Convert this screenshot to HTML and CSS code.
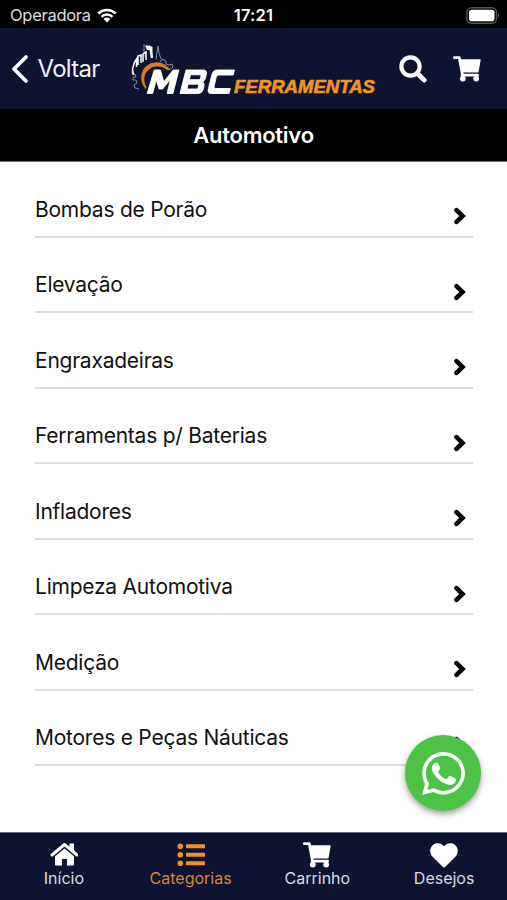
FILE: index.html
```html
<!DOCTYPE html>
<html lang="pt-BR">
<head>
<meta charset="utf-8">
<title>MBC Ferramentas</title>
<link rel="stylesheet" href="styles.css">
</head>
<body>
<svg class="defs" aria-hidden="true">
  <symbol id="chevron" viewBox="0 0 14 18"><path d="M3.500 3.200L9.500 9l-6 5.800" fill="none" stroke="#000" stroke-width="4.600" stroke-linecap="round" stroke-linejoin="miter"/></symbol>
  <symbol id="cart" viewBox="0 0 28 26"><path d="M1.300 1.700h5l3.100 16.700M9 19.200h15.600" fill="none" stroke="#fff" stroke-width="2.800" stroke-linecap="round" stroke-linejoin="round"/><path d="M6.400 3.300h20.200c.9 0 1.200.5 1 1.300l-2 11.100c-.1.600-.5.900-1.100.9H9z" fill="#fff"/><circle cx="9.800" cy="22.600" r="2.900" fill="#fff"/><circle cx="23.200" cy="22.600" r="2.900" fill="#fff"/></symbol>
</svg>
<div class="app">
  <div class="status">
    <span class="carrier">Operadora</span>
    <svg class="wifi" viewBox="0 0 20 15"><path d="M1.300 5.500a12.700 12.700 0 0 1 17.400 0M4.500 8.800a8 8 0 0 1 11 0" fill="none" stroke="#fff" stroke-width="2.500"/><path d="M6.500 10.900a5 5 0 0 1 7 0L10 14.600z" fill="#fff"/></svg>
    <span class="clock">17:21</span>
    <svg class="battery" viewBox="0 0 34 17"><rect x="1" y=".8" width="29.500" height="15.400" rx="4.500" fill="none" stroke="#555" stroke-width="1.400"/><rect x="3" y="2.800" width="25.500" height="11.400" rx="2.800" fill="#fff"/><path d="M32 6v5q2-2.500 0-5" fill="#666"/></svg>
  </div>
  <header class="header">
    <a class="back"><svg viewBox="0 0 18 30"><path d="M15 3L3 15l12 12" fill="none" stroke="#fff" stroke-width="3.800" stroke-linecap="round" stroke-linejoin="round"/></svg><span>Voltar</span></a>
    <svg class="logo" viewBox="130 40 250 60">
      <g fill="none" stroke="#8f98ad" stroke-width=".9">
        <path d="M139 89l-4-1-1-3 3-2-1-3h-3v-3h3l-1-3h-3v-4M160 62l2-3 4 2v3l3 1 3-1 1 3-2 2"/>
        <path d="M156 59l2-13 1 7 2 6M144 57V44"/>
      </g>
      <g fill="none" stroke="#fff" stroke-width="1.500">
        <path d="M133.500 75l-1-6 2-7 2-3v8M138 65v-9l3-1v8M143 62v-8l3-2v8"/>
      </g>
      <path d="M145 45.500h4.500l3 1.500v5l.5 6h-2.200l-1.300-8H147z" fill="#fff"/>
      <path d="M145.500 89a17 17 0 0 1-2.500-19 16 16 0 0 1 25-3l3 3h-4a14 14 0 0 0-21.500 3.500q-3 7 1 13.500z" fill="#d67c1b"/>
      <g fill="#fff" stroke="#fff" stroke-width=".9" stroke-linejoin="round">
        <path d="M147.200 93.500l7-23.500h6.200l3.400 12 9.300-12h5.800l-6 23.500h-5.800l3.500-14.500-8 10h-3.500l-2.800-9-3.700 13.500z"/>
        <path fill-rule="evenodd" d="M180 93.500l6-23.500h17q4.300 0 3.400 4.300l-1 3.900q-.7 2.800-3 3.700 2.400 1 1.600 4.200l-.9 3.400q-1 4-5 4zm7-4.500h9.500q1.400 0 1.700-1.500l.4-1.700q.4-1.600-1.100-1.600h-9.400zm2.300-9.300h9.500q1.300 0 1.600-1.300l.6-2.200q.3-1.400-1.100-1.400h-9.400z"/>
        <path d="M234.500 70l-1.400 5h-14.500q-1.800 0-2.300 1.800l-2.300 9.800q-.4 1.900 1.500 1.900h14.900L229 93.500h-17.700q-4 0-3-4.400l3.700-14.800q1.100-4.300 5.300-4.300z"/>
      </g>
      <text x="234" y="93" class="logo-sub" textLength="141" lengthAdjust="spacingAndGlyphs">FERRAMENTAS</text>
    </svg>
    <svg class="search" viewBox="0 0 28 28"><circle cx="11.500" cy="11.500" r="9.100" fill="none" stroke="#fff" stroke-width="4.200"/><path d="M18.500 18.500l6.700 6.700" stroke="#fff" stroke-width="4.700" stroke-linecap="round"/></svg>
    <svg class="cart"><use href="#cart"/></svg>
  </header>
  <h1 class="title">Automotivo</h1>
  <ul class="list">
    <li><span>Bombas de Porão</span><svg><use href="#chevron"/></svg></li>
    <li><span>Elevação</span><svg><use href="#chevron"/></svg></li>
    <li><span>Engraxadeiras</span><svg><use href="#chevron"/></svg></li>
    <li><span>Ferramentas p/ Baterias</span><svg><use href="#chevron"/></svg></li>
    <li><span>Infladores</span><svg><use href="#chevron"/></svg></li>
    <li><span>Limpeza Automotiva</span><svg><use href="#chevron"/></svg></li>
    <li><span>Medição</span><svg><use href="#chevron"/></svg></li>
    <li><span>Motores e Peças Náuticas</span><svg><use href="#chevron"/></svg></li>
  </ul>
  <nav class="tabs">
    <a><svg viewBox="0 0 28 26"><path d="M2 13L14.500 2.500 27 13" fill="none" stroke="#fff" stroke-width="3" stroke-linecap="round" stroke-linejoin="round"/><path d="M19.500 1.500h4.500v9l-4.500-3zM5 14.300l9.500-7.900 9.500 7.900v8.200q0 1-1 1h-6v-6.500h-5v6.500H6q-1 0-1-1z" fill="#fff"/></svg><span>Início</span></a>
    <a class="active"><svg viewBox="0 0 28 26"><g fill="#ee9228"><circle cx="3.300" cy="4.200" r="2.800"/><circle cx="3.300" cy="12.700" r="2.800"/><circle cx="3.300" cy="21.200" r="2.800"/><rect x="9" y="2.300" width="19" height="4" rx=".8"/><rect x="9" y="10.800" width="19" height="4" rx=".8"/><rect x="9" y="19.300" width="19" height="4" rx=".8"/></g></svg><span>Categorias</span></a>
    <a><svg><use href="#cart"/></svg><span>Carrinho</span></a>
    <a><svg viewBox="0 0 28 26"><path d="M14 4.300C17 .8 22 .2 25.300 3.300c3.400 3.200 3.200 8.200.1 11.400L15 25q-1 1-2 0L2.600 14.700C-.5 11.500-.7 6.500 2.700 3.300 6 .2 11 .8 14 4.300z" fill="#fff"/></svg><span>Desejos</span></a>
  </nav>
  <a class="whatsapp" aria-label="WhatsApp"><svg viewBox="0 0 448 512"><path fill="#fff" d="M380.900 97.100C339 55.100 283.200 32 223.900 32c-122.400 0-222 99.600-222 222 0 39.100 10.200 77.300 29.600 111L0 480l117.700-30.900c32.400 17.700 68.900 27 106.100 27h.1c122.300 0 224.100-99.600 224.100-222 0-59.300-25.200-115-67.100-157zm-157 341.600c-33.200 0-65.700-8.900-94-25.700l-6.700-4-69.800 18.300L72 359.200l-4.400-7c-18.500-29.400-28.200-63.300-28.200-98.200 0-101.700 82.800-184.500 184.600-184.500 49.300 0 95.600 19.200 130.400 54.100 34.800 34.900 56.200 81.200 56.100 130.500 0 101.800-84.900 184.600-186.600 184.600z"/><path fill="#fff" d="M151 145c8-1 15-1 19 8l18 43c3 8 1 12-3 18l-15 18c-4 5-4 9-1 14 19 32 45 54 79 67 6 3 10 2 14-3l19-23c5-7 9-6 16-4l44 21c7 4 11 5 12 9 2 17-5 38-20 49-17 12-37 17-59 11-70-20-118-59-157-121-21-34-20-73 8-100 7-6 15-7 26-7z"/></svg></a>
</div>
</body>
</html>
```
FILE: styles.css
```css
* { box-sizing: border-box; }
body { margin: 0; background: #fff; font-family: Inter, "Liberation Sans", sans-serif; color: #111; }
.defs { position: absolute; width: 0; height: 0; }
.app { position: relative; width: 507px; height: 900px; display: flex; flex-direction: column; overflow: hidden; }
svg { display: block; flex: none; }

.status { height: 28px; background: #000; display: grid; grid-template-columns: 87px 20px 1fr auto; align-items: center; padding: 1px 7px 0 10px; color: #fff; position: relative; }
.carrier { font-size: 16.500px; color: #ddd; letter-spacing: -.28px; line-height: 28px; }
.wifi { width: 20px; height: 15px; }
.clock { position: absolute; left: 0; right: 0; text-align: center; font-size: 16.500px; font-weight: 600; letter-spacing: .2px; line-height: 28px; top: 1px; }
.battery { width: 34px; height: 17px; grid-column: 4; }

.header { height: 81px; background: #0d1330; display: flex; align-items: center; padding-left: 11px; }
.back { display: flex; align-items: center; width: 119px; color: #eef0f7; font-size: 24px; letter-spacing: -.7px; }
.back svg { width: 18px; height: 30px; margin-right: 8.500px; }
.logo { width: 250px; height: 60px; margin-top: 2px; }
.logo-sub { font: italic 900 18px "Liberation Sans", sans-serif; fill: #f19421; stroke: #f19421; stroke-width: .6px; }
.search { width: 28px; height: 28px; margin-left: 18.500px; }
.cart { width: 28px; height: 26px; margin-left: 26.500px; }

.title { height: 53px; margin: 0; background: #000; border-bottom: 1px solid #777; color: #fff; font-size: 22px; font-weight: 600; letter-spacing: -.25px; line-height: 53px; text-align: center; }

.list { list-style: none; margin: 0; padding: 0 34px 0 35px; flex: 1; }
.list li { height: 75.500px; border-bottom: 2px solid #dcdcdc; display: flex; justify-content: space-between; align-items: flex-start; padding-top: 33.500px; font-size: 21px; letter-spacing: -.24px; line-height: 28px; }
.list svg { width: 14px; height: 18px; margin: 11.500px 6px 0 0; }

.tabs { height: 68px; background: #0d1330; border-top: 1px solid #646b7c; display: grid; grid-template-columns: repeat(4, 1fr); }
.tabs a { display: flex; flex-direction: column; align-items: center; padding: 9px 0 0 1px; color: #d9dce6; font-size: 16px; line-height: 20px; }
.tabs svg { width: 28px; height: 26px; }
.tabs .active { color: #dd8428; }

.whatsapp { position: absolute; left: 405px; top: 735px; width: 76px; height: 76px; border-radius: 50%; background: #4cc247; box-shadow: 0 3px 6px rgba(0, 0, 0, .4); display: flex; align-items: center; justify-content: center; }
.whatsapp svg { width: 43px; height: 49px; }
```
